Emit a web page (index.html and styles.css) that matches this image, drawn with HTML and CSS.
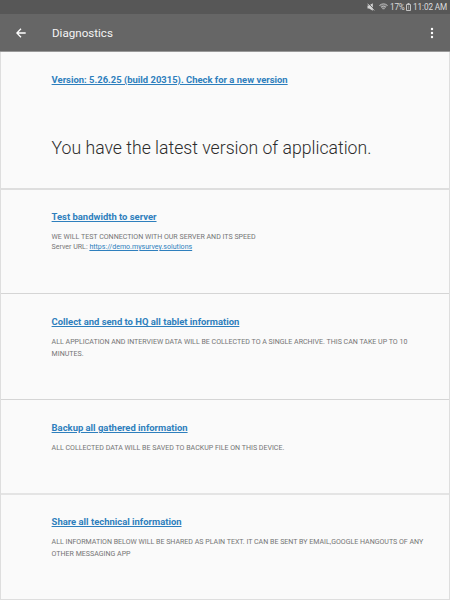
FILE: index.html
```html
<!DOCTYPE html>
<html lang="en">
<head>
<meta charset="utf-8">
<title>Diagnostics</title>
<link rel="stylesheet" href="styles.css">
</head>
<body>
<div class="status">
  <svg class="mute" viewBox="0 0 8 8"><path d="M.5 2.5h1.6L5.8.3v7.4L2.1 5.5H.5z" fill="#d4d4d4"/><path d="M1.3.3l6.4 6.6" stroke="#575757" stroke-width=".9"/><path d="M.5.7l6.7 6.7" stroke="#d4d4d4" stroke-width=".9"/></svg>
  <svg class="wifi" viewBox="0 0 9 8"><path d="M.5 2.5Q4.5-.8 8.5 2.5L4.5 7z" fill="#777"/><path d="M.4 2.5Q4.5-.8 8.6 2.5M2 4.2q2.5-2 5 0M3.4 5.7q1.1-.8 2.2 0" fill="none" stroke="#bbb" stroke-width="1"/></svg>
  <span class="percent">17%</span>
  <svg class="battery" viewBox="0 0 5 8"><path d="M1.5.5h2M.5 1.5h4v6h-4z" fill="none" stroke="#c4c4c4"/><path d="M2.5 2.5v4" stroke="#888"/></svg>
  <span class="clock">11:02 AM</span>
</div>
<header class="bar">
  <svg class="back" viewBox="0 0 10 10"><path d="M9.7 5H1M5 .8L.8 5 5 9.2" fill="none" stroke="#fff" stroke-width="1.3"/></svg>
  <h1>Diagnostics</h1>
  <svg class="more" viewBox="0 0 4 12"><g fill="#fff"><circle cx="2" cy="2" r="1.2"/><circle cx="2" cy="6" r="1.2"/><circle cx="2" cy="10" r="1.2"/></g></svg>
</header>
<main>
  <section class="version">
    <a class="title">Version: 5.26.25 (build 20315). Check for a new version</a>
    <p class="latest">You have the latest version of application.</p>
  </section>
  <section class="bandwidth">
    <a class="title">Test bandwidth to server</a>
    <p class="note tight">WE WILL TEST CONNECTION WITH OUR SERVER AND ITS SPEED</p>
    <p class="note tight">Server URL: <a>https://demo.mysurvey.solutions</a></p>
  </section>
  <section class="collect">
    <a class="title">Collect and send to HQ all tablet information</a>
    <p class="note">ALL APPLICATION AND INTERVIEW DATA WILL BE COLLECTED TO A SINGLE ARCHIVE. THIS CAN TAKE UP TO 10<br>MINUTES.</p>
  </section>
  <section class="backup">
    <a class="title">Backup all gathered information</a>
    <p class="note">ALL COLLECTED DATA WILL BE SAVED TO BACKUP FILE ON THIS DEVICE.</p>
  </section>
  <section class="share">
    <a class="title">Share all technical information</a>
    <p class="note">ALL INFORMATION BELOW WILL BE SHARED AS PLAIN TEXT. IT CAN BE SENT BY EMAIL,GOOGLE HANGOUTS OF ANY<br>OTHER MESSAGING APP</p>
  </section>
</main>
</body>
</html>
```
FILE: styles.css
```css
* { box-sizing: border-box; }
body { margin: 0; width: 450px; height: 600px; overflow: hidden; font-family: Roboto, "Liberation Sans", sans-serif; background: #fafafa; }
h1, p { margin: 0; font-weight: 400; white-space: nowrap; }
svg { display: block; flex: none; }
.status { display: flex; align-items: center; height: 14px; padding-left: 367px; background: #575757; color: #dcdcdc; font-size: 8.2px; line-height: 14px; white-space: nowrap; }
.mute { width: 8px; height: 8px; }
.wifi { width: 9px; height: 8px; margin-left: 4px; }
.percent { width: 14px; margin-left: 2px; letter-spacing: -.2px; }
.battery { width: 5px; height: 8px; margin-left: 2px; }
.clock { margin-left: 2px; letter-spacing: -.1px; }
.bar { display: flex; align-items: center; height: 38px; padding: 0 16px; background: #666; border-bottom: 1px solid #999; }
.back { width: 10px; height: 10px; }
h1 { margin-left: 26px; font-size: 11.6px; line-height: 18px; color: #f4f4f4; }
.more { width: 4px; height: 12px; margin-left: auto; }
main { height: 548px; border: solid #dedede; border-width: 0 1px 1px; }
section { padding: 21px 0 0 50.6px; border-bottom: 1px solid #d5d5d5; }
section:last-child { border-bottom: 0; }
.version { height: 138px; border-bottom-width: 2px; border-color: #dedede; }
.bandwidth { height: 104px; padding-top: 20px; }
.collect { height: 106px; }
.backup { height: 95px; border-bottom-width: 2px; border-color: #e4e4e4; }
.share { padding-top: 20px; }
.title { display: block; width: max-content; font-size: 9.45px; line-height: 14px; font-weight: 700; color: #2e7fbd; text-decoration: underline; text-underline-offset: 1px; text-decoration-thickness: 1px; white-space: nowrap; }
.latest { margin-top: 48px; font-size: 17.65px; line-height: 26px; font-weight: 300; color: #2c2c2c; }
.note { width: max-content; font-size: 7.05px; line-height: 12px; color: #757575; }
.title + .note { margin-top: 7px; }
.title + .tight { margin-top: 8px; }
.tight { line-height: 10px; }
.note a { color: #2e7fbd; text-decoration: underline; }
```
